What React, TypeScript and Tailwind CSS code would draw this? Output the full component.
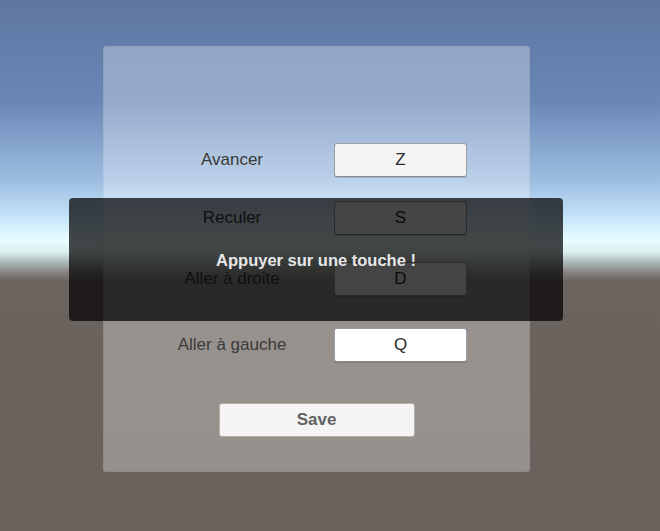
const rows = [
  { label: "Avancer", key: "Z", bg: "bg-[#f4f4f4]", mt: "mt-[96px]" },
  { label: "Reculer", key: "S", bg: "bg-[#f4f4f4]", mt: "mt-[24px]" },
  { label: "Aller à droite", key: "D", bg: "bg-[#f4f4f4]", mt: "mt-[27px]" },
  { label: "Aller à gauche", key: "Q", bg: "bg-white", mt: "mt-[32px]" },
];

function KeyRow({ label, keyName, bg, mt }: { label: string; keyName: string; bg: string; mt: string }) {
  return (
    <div className={`${mt} grid grid-cols-[204px_133px] pl-[26px] items-center`}>
      <span className="text-center text-[17px] text-[#3a3a3a]">{label}</span>
      <button
        className={`h-[34px] rounded-[3px] border border-[#9a9ea6] border-b-[#8a8c90] ${bg} text-[17px] text-[#2c2c2c] shadow-[0_1px_0_rgba(0,0,0,0.15)]`}
      >
        {keyName}
      </button>
    </div>
  );
}

export default function App() {
  return (
    <div
      className="relative w-[660px] h-[531px] overflow-hidden bg-[linear-gradient(to_bottom,#5e77a1_0px,#6986b5_100px,#9dbde0_180px,#c2e2f8_215px,#e8fdff_240px,#dcefef_252px,#aab5b6_263px,#86817e_273px,#6b635e_281px,#69615c_531px)] font-['Liberation_Sans',Arial,sans-serif]"
    >
      <div className="pt-[46px] pl-[103px]">
        <div className="w-[427px] h-[426px] rounded-[3px] bg-white/[0.3] border border-black/[0.04] flex flex-col">
          {rows.map((r) => (
            <KeyRow key={r.key} label={r.label} keyName={r.key} bg={r.bg} mt={r.mt} />
          ))}
          <div className="mt-[41px] flex justify-center">
            <button className="w-[196px] h-[34px] rounded-[3px] border border-[#b4b2ae] bg-[#f4f4f4] text-[17px] font-bold text-[#626262]">
              Save
            </button>
          </div>
        </div>
      </div>

      {/* waiting-for-key popup lies over the panel */}
      <div className="absolute left-[69px] top-[198px] w-[494px] h-[123px] rounded-[4px] bg-black/[0.72] flex justify-center pt-[54px]">
        <span className="text-[16.5px] font-bold text-[#e6e6e6] leading-none">Appuyer sur une touche !</span>
      </div>
    </div>
  );
}
